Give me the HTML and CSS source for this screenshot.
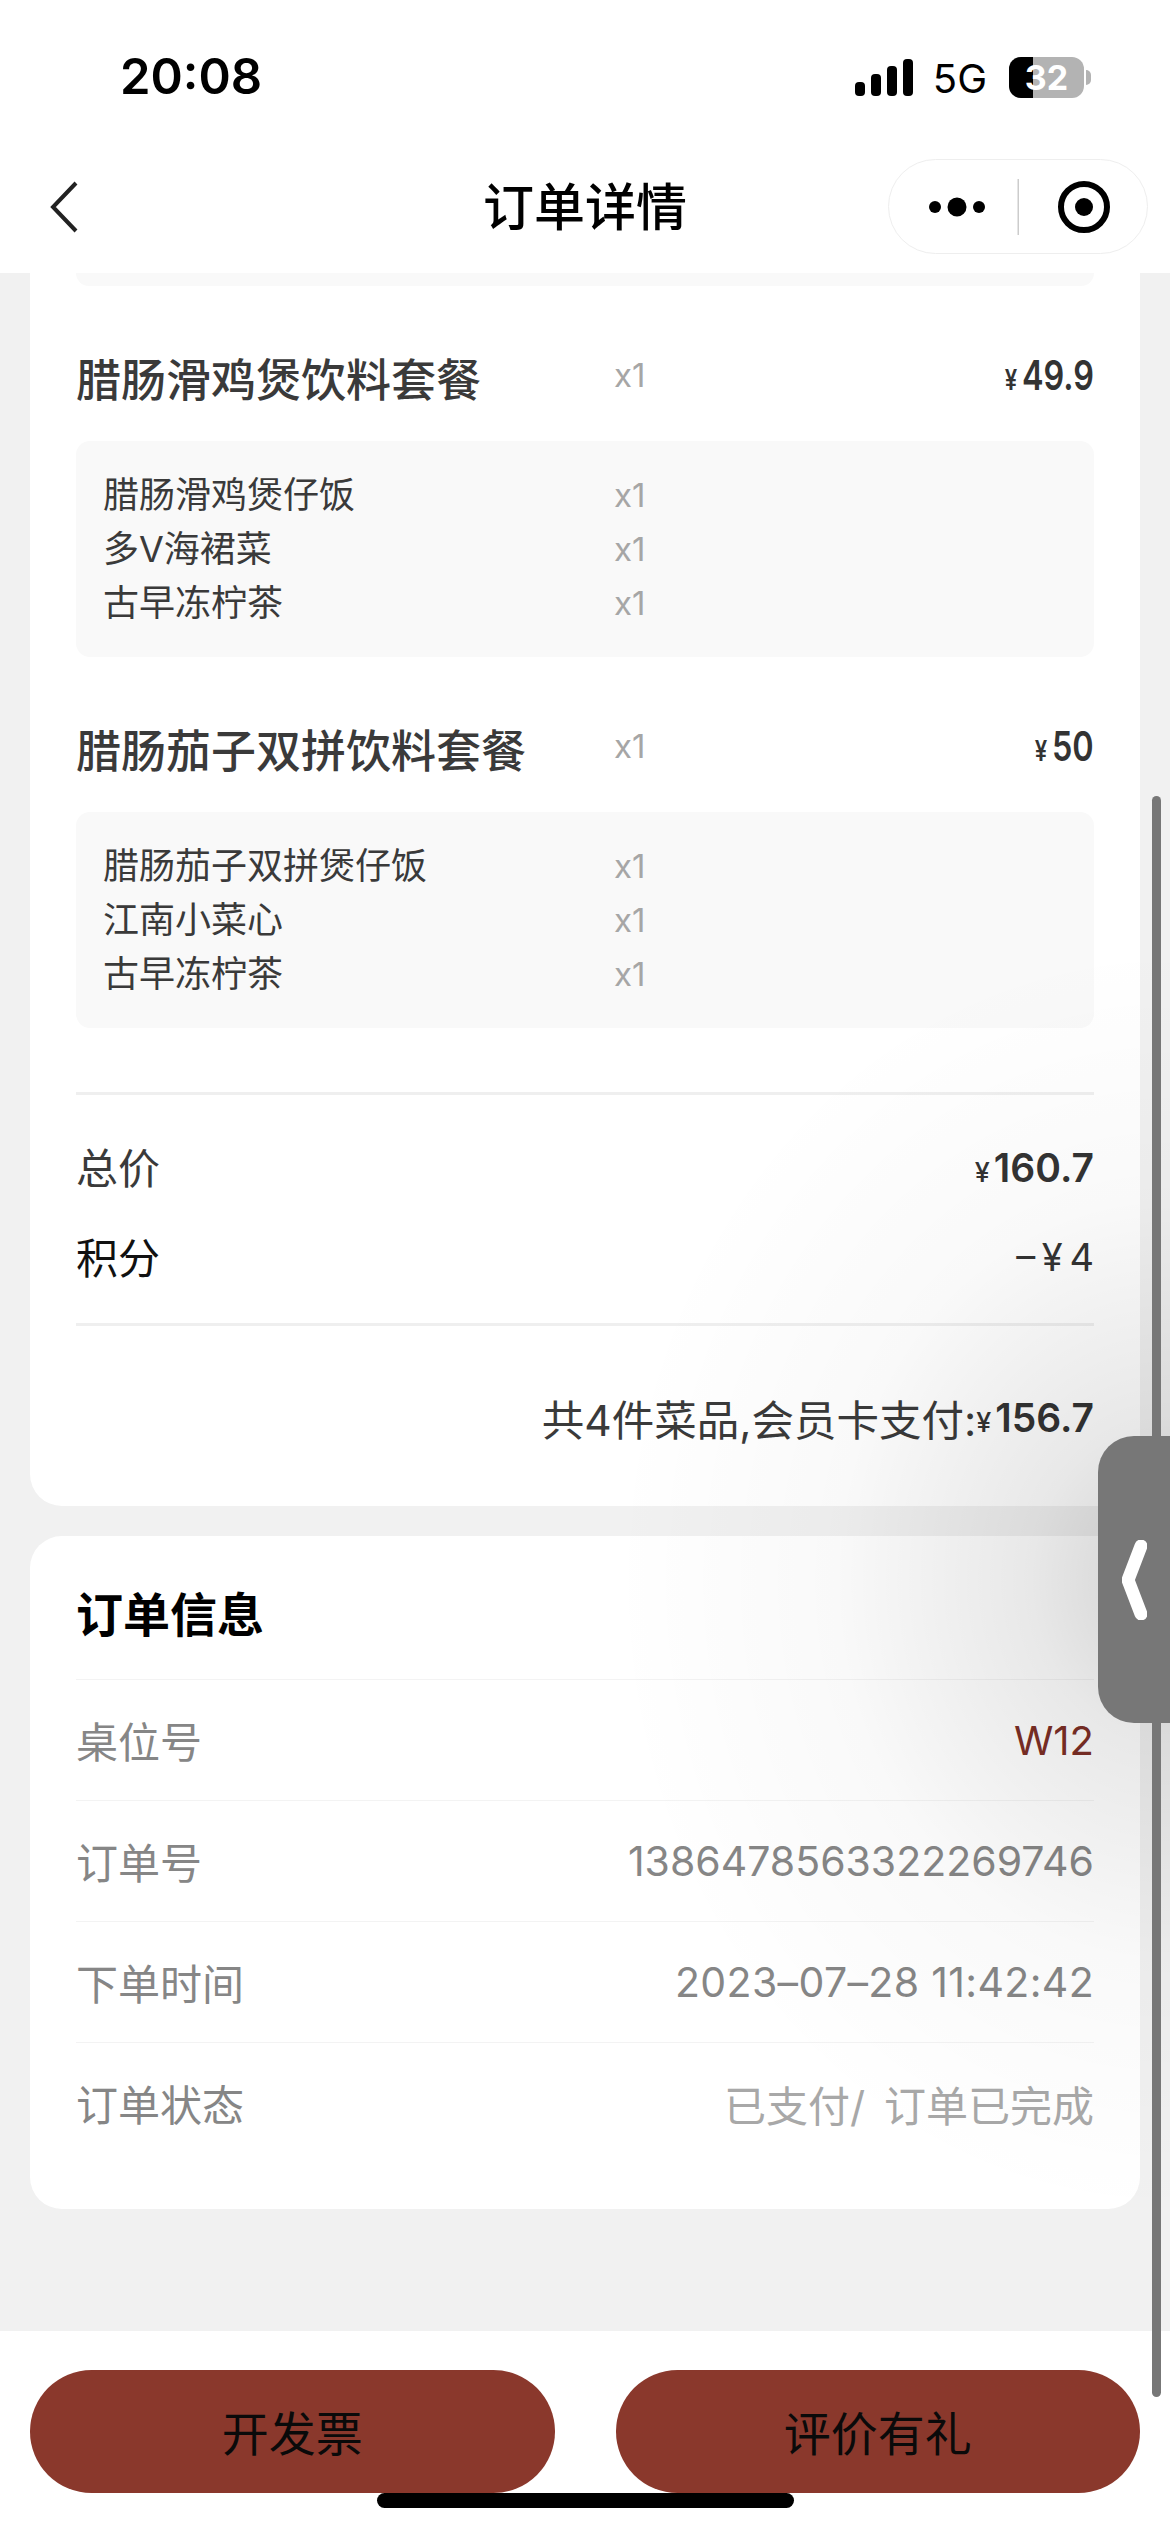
FILE: index.html
```html
<!DOCTYPE html>
<html lang="zh-CN">
<head>
<meta charset="utf-8">
<title>订单详情</title>
<link rel="stylesheet" href="styles.css">
</head>
<body>
<div class="app">
  <header class="top">
    <div class="status">
      <span class="time">20:08</span>
      <div class="status-right">
        <svg class="signal" width="58" height="37" viewBox="0 0 58 37"><rect x="0" y="23" width="10" height="14" rx="4"/><rect x="16" y="15" width="10" height="22" rx="4"/><rect x="32" y="7" width="10" height="30" rx="4"/><rect x="48" y="0" width="10" height="37" rx="4"/></svg>
        <span class="net">5G</span>
        <div class="battery"><span class="battery-fill"></span><span class="battery-num">32</span></div>
        <span class="battery-tip"></span>
      </div>
    </div>
    <nav class="nav">
      <svg class="back" width="30" height="52" viewBox="0 0 30 52"><path d="M26 2 L3 26 L26 50" fill="none" stroke="#222" stroke-width="4"/></svg>
      <h1 class="title">订单详情</h1>
      <div class="capsule">
        <svg width="260" height="95" viewBox="0 0 260 95"><circle cx="47" cy="48" r="6"/><circle cx="69" cy="48" r="9.5"/><circle cx="91" cy="48" r="6"/><rect x="129.5" y="20" width="1.5" height="56" fill="#ccc"/><circle cx="196" cy="48" r="23" fill="none" stroke="#000" stroke-width="6"/><circle cx="196" cy="48" r="9"/></svg>
      </div>
    </nav>
  </header>

  <main class="scroll">
    <section class="card card-items">
      <div class="box box-stub"></div>

      <div class="item">
        <div class="item-head">
          <span class="item-name">腊肠滑鸡煲饮料套餐</span>
          <span class="qty">x1</span>
          <span class="price"><small>¥</small>49.9</span>
        </div>
        <div class="box">
          <div class="sub-row"><span class="sub-name">腊肠滑鸡煲仔饭</span><span class="qty">x1</span></div>
          <div class="sub-row"><span class="sub-name">多V海裙菜</span><span class="qty">x1</span></div>
          <div class="sub-row"><span class="sub-name">古早冻柠茶</span><span class="qty">x1</span></div>
        </div>
      </div>

      <div class="item">
        <div class="item-head">
          <span class="item-name">腊肠茄子双拼饮料套餐</span>
          <span class="qty">x1</span>
          <span class="price"><small>¥</small>50</span>
        </div>
        <div class="box">
          <div class="sub-row"><span class="sub-name">腊肠茄子双拼煲仔饭</span><span class="qty">x1</span></div>
          <div class="sub-row"><span class="sub-name">江南小菜心</span><span class="qty">x1</span></div>
          <div class="sub-row"><span class="sub-name">古早冻柠茶</span><span class="qty">x1</span></div>
        </div>
      </div>

      <div class="sums">
        <div class="sum-row"><span class="sum-label">总价</span><span class="amount"><small>¥</small>160.7</span></div>
        <div class="sum-row sum-dark"><span class="sum-label">积分</span><span class="discount">– ¥ 4</span></div>
      </div>
      <div class="paid">共4件菜品,会员卡支付:<span class="amount"><small>¥</small>156.7</span></div>
    </section>

    <section class="card card-info">
      <h2 class="info-title">订单信息</h2>
      <div class="info-row"><span class="info-label">桌位号</span><span class="val-red">W12</span></div>
      <div class="info-row"><span class="info-label">订单号</span><span class="val">1386478563322269746</span></div>
      <div class="info-row"><span class="info-label">下单时间</span><span class="val val-date">2023–07–28 11:42:42</span></div>
      <div class="info-row"><span class="info-label">订单状态</span><span class="val-light">已支付/ 订单已完成</span></div>
    </section>
  </main>

  <footer class="actions">
    <button class="btn">开发票</button>
    <button class="btn">评价有礼</button>
  </footer>

  <div class="glow"></div>
  <div class="scrollbar"></div>
  <div class="handle">
    <svg width="25" height="80" viewBox="0 0 25 80"><path d="M19 6 L6 40 L19 74" fill="none" stroke="#fff" stroke-width="13" stroke-linecap="round" stroke-linejoin="round"/></svg>
  </div>
  <div class="home"></div>
</div>
</body>
</html>
```
FILE: styles.css
```css
* { box-sizing: border-box; }
html, body { margin: 0; padding: 0; }
body {
  width: 1170px;
  height: 2532px;
  overflow: hidden;
  background: #fff;
  font-family: Inter, "Noto Sans CJK SC", sans-serif;
  color: #333;
}
.app {
  position: relative;
  width: 1170px;
  height: 2532px;
  display: flex;
  flex-direction: column;
  overflow: hidden;
}

/* header */
.top { height: 273px; background: #fff; flex: none; display: flex; flex-direction: column; }
.status { height: 150px; display: flex; justify-content: space-between; align-items: flex-start; padding: 50px 79px 0 120px; }
.time { font-size: 49px; font-weight: 600; line-height: 54px; color: #000; }
.status-right { display: flex; align-items: flex-start; padding-top: 7px; }
.signal { margin-top: 2px; margin-right: 20px; }
.net { font-size: 40px; line-height: 44px; color: #000; margin-right: 22px; }
.battery { position: relative; width: 75px; height: 41px; border-radius: 12px; background: #b3b3b3; overflow: hidden; text-align: center; color: #fff; font-size: 34px; font-weight: 700; line-height: 41px; }
.battery-fill { position: absolute; left: 0; top: 0; bottom: 0; width: 24px; background: #000; }
.battery-num { position: relative; }
.battery-tip { width: 5px; height: 15px; margin: 13px 0 0 2px; background: #b3b3b3; border-radius: 0 8px 8px 0; }
.nav { position: relative; flex: 1; display: flex; justify-content: center; align-items: flex-start; }
.back { position: absolute; left: 50px; top: 31px; }
.title { margin: 27px 0 0; font-size: 51px; line-height: 62px; font-weight: 500; color: #000; }
.capsule { position: absolute; left: 888px; top: 9px; width: 260px; height: 95px; border: 1.5px solid #eee; border-radius: 48px; overflow: hidden; }
.capsule svg { display: block; margin: -1.5px; }

/* scrolling content */
.scroll { flex: 1; background: #f1f1f1; padding: 0 30px; overflow: hidden; }
.card { background: #fff; }
.card-items { padding: 0 46px 44px; border-radius: 0 0 32px 32px; }
.card-info { margin-top: 30px; padding: 48px 46px 46px; border-radius: 32px; }
.box { background: #f9f9f9; border-radius: 14px; padding: 27px 27px; }
.box-stub { height: 13px; padding: 0; border-radius: 0 0 14px 14px; }

.item-head { display: flex; align-items: center; height: 70px; margin: 58px 0 27px; }
.item-name { width: 538px; font-size: 45px; line-height: 70px; font-weight: 500; color: #3a3a3a; position: relative; top: 2px; }
.qty { font-size: 33px; color: #a6a6a6; position: relative; top: -4px; }
.sub-row .qty { top: 0; }
.price { display: inline-block; margin-left: auto; font-size: 41px; font-weight: 600; color: #333; position: relative; top: -4px; transform: scaleX(.79); transform-origin: right center; }
.price small { font-size: 28px; margin-right: 6px; }
.sub-row { display: flex; align-items: center; height: 54px; }
.sub-name { width: 511px; font-size: 36px; line-height: 54px; color: #3a3a3a; }

.sums { margin-top: 64px; padding: 27px 0 0; height: 234px; border-top: 3px solid #efefef; border-bottom: 3px solid #efefef; }
.sum-row { display: flex; justify-content: space-between; align-items: center; height: 90px; font-size: 42px; color: #3a3a3a; }
.sum-label { position: relative; top: -2px; }
.sum-dark { color: #111; }
.amount { font-size: 39px; font-weight: 600; color: #333; }
.amount small { font-size: 27px; margin-right: 4px; font-weight: 500; }
.discount { font-size: 38px; color: #333; word-spacing: -4px; }
.paid { display: flex; justify-content: flex-end; align-items: center; height: 90px; margin-top: 46px; font-size: 42.5px; color: #3a3a3a; }

.info-title { margin: 0; padding-bottom: 35px; font-size: 47px; line-height: 60px; font-weight: 700; color: #000; position: relative; top: 1px; }
.info-row { display: flex; justify-content: space-between; align-items: center; height: 121px; border-top: 1px solid #f3f3f3; font-size: 41px; color: #868686; }
.info-label { font-size: 42px; position: relative; top: -1px; }
.val { font-size: 41px; }
.val-date { letter-spacing: .35px; }
.val-red { font-size: 40px; color: #7d2f26; }
.val-light { color: #a8a8a8; font-size: 42px; word-spacing: 7px; }

/* bottom */
.actions { flex: none; height: 201px; background: #fff; display: flex; gap: 61px; padding: 39px 30px 0; align-items: flex-start; }
.btn { flex: 1; height: 123px; border: 0; border-radius: 62px; background: #8a382c; color: #0a0a0a; font-family: inherit; font-size: 47px; font-weight: 400; padding: 0 0 3px; }

/* overlays */
.glow { position: absolute; inset: 0; pointer-events: none; background: radial-gradient(ellipse 560px 640px at 1170px 1580px, rgba(0,0,0,.18) 0%, rgba(0,0,0,.09) 25%, rgba(0,0,0,.025) 60%, rgba(0,0,0,0) 100%); }
.scrollbar { position: absolute; left: 1152px; top: 796px; width: 9px; height: 1601px; border-radius: 5px; background: #777; }
.handle { position: absolute; left: 1098px; top: 1436px; width: 72px; height: 287px; background: #777; border-radius: 36px 0 0 36px; display: flex; align-items: center; padding-left: 24px; }
.home { position: absolute; left: 377px; top: 2493px; width: 417px; height: 15px; border-radius: 8px; background: #000; }
```
